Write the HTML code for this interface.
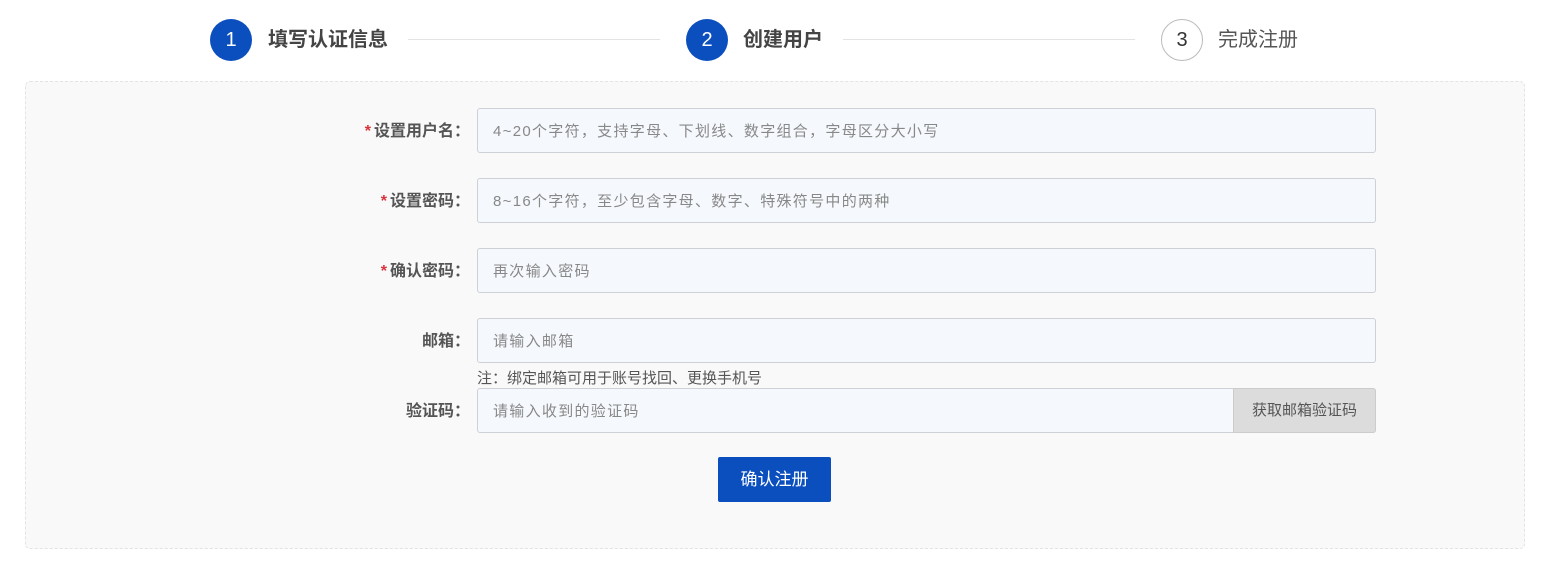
<!DOCTYPE html>
<html><head><meta charset="utf-8"><style>
*{box-sizing:border-box;margin:0;padding:0}
body{width:1561px;height:566px;background:#fff;font-family:"Liberation Sans","Noto Sans CJK SC",sans-serif;position:relative;overflow:hidden}
.a{position:absolute}
.c{width:42px;height:42px;border-radius:50%;text-align:center;line-height:42px;font-size:20px}
.c.on{background:#0b4fbf;color:#fff}
.c.off{border:1px solid #bbb;color:#333;line-height:40px}
.st{font-size:20px;line-height:42px;color:#444}
.ln{height:1px;background:#e3e3e3;top:39px}
.panel{left:25px;top:81px;width:1500px;height:468px;background:#f9f9f9;border:1px dashed #e3e3e3;border-radius:5px}
.lb{width:200px;left:270px;text-align:right;font-size:16px;font-weight:bold;color:#555;line-height:46px}
.lb i{color:#d9333b;font-style:normal;margin-right:3px}
.in{left:477px;width:899px;height:45px;background:#f5f8fc;border:1px solid #cdd0d6;border-radius:3px;font-size:15px;letter-spacing:1.3px;color:#888;line-height:45px;padding-left:15px}
</style></head><body>
<div class="a c on" style="left:210px;top:19px">1</div>
<div class="a st" style="left:268px;top:19px;font-weight:bold">填写认证信息</div>
<div class="a ln" style="left:408px;width:252px"></div>
<div class="a c on" style="left:686px;top:19px">2</div>
<div class="a st" style="left:743px;top:19px;font-weight:bold">创建用户</div>
<div class="a ln" style="left:843px;width:292px"></div>
<div class="a c off" style="left:1161px;top:19px">3</div>
<div class="a st" style="left:1218px;top:19px;color:#555">完成注册</div>
<div class="a panel"></div>
<div class="a lb" style="top:109px"><i>*</i>设置用户名：</div>
<div class="a in" style="top:108px">4~20个字符，支持字母、下划线、数字组合，字母区分大小写</div>
<div class="a lb" style="top:179px"><i>*</i>设置密码：</div>
<div class="a in" style="top:178px">8~16个字符，至少包含字母、数字、特殊符号中的两种</div>
<div class="a lb" style="top:249px"><i>*</i>确认密码：</div>
<div class="a in" style="top:248px">再次输入密码</div>
<div class="a lb" style="top:319px">邮箱：</div>
<div class="a in" style="top:318px">请输入邮箱</div>
<div class="a" style="left:477px;top:367px;font-size:15px;color:#555">注：绑定邮箱可用于账号找回、更换手机号</div>
<div class="a lb" style="top:389px">验证码：</div>
<div class="a in" style="top:388px">请输入收到的验证码</div>
<div class="a" style="left:1233px;top:388px;width:143px;height:45px;background:#dcdcdc;border:1px solid #ccc;border-radius:0 3px 3px 0;font-size:15px;color:#555;text-align:center;line-height:43px">获取邮箱验证码</div>
<div class="a" style="left:718px;top:457px;width:113px;height:45px;background:#0b4fbf;border-radius:2px;color:#fff;font-size:17px;text-align:center;line-height:45px">确认注册</div>
</body></html>
